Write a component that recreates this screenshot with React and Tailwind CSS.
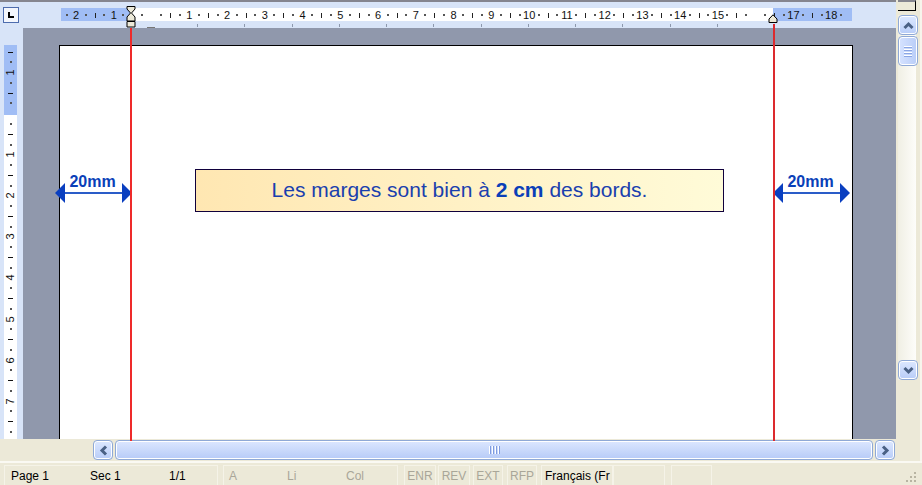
import React from "react";

function Tick({ vertical }) {
  return <span className={vertical ? "h-px w-[5px] bg-[#111]" : "h-[5px] w-px bg-[#222]"} />;
}

function Dot() {
  return <span className="h-[2px] w-[2px] bg-[#555]" />;
}

// Quarter-centimetre marks: "." is a dot, "|" a half-centimetre tick, "" a blank.
const topMarks = [];
for (let n = -2; n <= 18; n++) {
  topMarks.push(".", n === 0 || n === 16 ? "" : String(Math.abs(n)), ".");
  if (n < 18) topMarks.push(n === -1 ? "" : "|");
}

const sideMarks = ["|", ".", "1", ".", "|", ".", ""];
for (let n = 1; n <= 7; n++) sideMarks.push(".", "|", ".", String(n));
sideMarks.push(".", "|", ".");

function Mark({ mark, vertical }) {
  if (mark === ".") return <Dot />;
  if (mark === "|") return <Tick vertical={vertical} />;
  return <span className={vertical ? "-rotate-90" : ""}>{mark}</span>;
}

function TopRuler() {
  return (
    <div className="flex h-7 shrink-0 flex-col border-t-2 border-[#85858f] bg-[#d8e4f8]">
      <div className="flex pt-[5px]">
        <button
          type="button"
          aria-label="Tabulation gauche"
          className="ml-[3px] flex h-4 w-4 shrink-0 items-center justify-center border border-[#4d6cae] bg-[#f3f6fd]"
        >
          <span className="h-[6px] w-[6px] border-b-2 border-l-2 border-black" />
        </button>
        <div className="relative mr-11 ml-[42px] mt-px flex h-[13px] flex-1 items-center bg-[linear-gradient(90deg,#a0bdf5_70px,#fff_70px,#fff_calc(100%-79px),#a0bdf5_calc(100%-79px))] pt-px pr-[7px] pl-px text-[11px] leading-[13px] text-[#111]">
          {topMarks.map((m, i) => (
            <span key={i} className="flex w-0 flex-1 items-center justify-center">
              <Mark mark={m} />
            </span>
          ))}
          <svg className="absolute -top-[2px] left-[65px]" width="10" height="22" viewBox="0 0 10 22" aria-hidden="true">
            <path d="M1 .5H9V3L5.5 7L9 11V15H1V11L4.5 7L1 3Z" fill="#ece9d8" stroke="#000" />
            <path d="M1 15.5H9V21H1Z" fill="#ece9d8" stroke="#000" />
          </svg>
          <svg className="absolute top-[6px] right-[74px]" width="10" height="10" viewBox="0 0 10 10" aria-hidden="true">
            <path d="M5 .8L9 5V8.5H1V5Z" fill="#ece9d8" stroke="#000" />
          </svg>
        </div>
      </div>
      <div className="mr-[155px] ml-[147px] flex items-start">
        <span className="mt-[4px] h-px w-[8px] bg-[#777]" />
        <div className="ml-[19px] flex flex-1">
          {Array.from({ length: 12 }, (_, i) => (
            <span key={i} className="flex flex-1 justify-center">
              <span className="mt-px h-[3px] w-px bg-[#8d98ad]" />
            </span>
          ))}
        </div>
      </div>
    </div>
  );
}

function SideRuler() {
  return (
    <div className="flex w-[23px] shrink-0 bg-[#d8e4f8] pt-[17px] pl-1">
      <div className="flex w-[13px] flex-col bg-[linear-gradient(180deg,#a0bdf5_70px,#fff_70px)] py-[2px] text-[11px] leading-[13px] text-[#111]">
        {sideMarks.map((m, i) => (
          <span key={i} className="flex h-0 flex-1 items-center justify-center">
            <Mark mark={m} vertical />
          </span>
        ))}
      </div>
    </div>
  );
}

function Measure({ className }) {
  return (
    <div className={"flex w-[77px] shrink-0 flex-col items-stretch pt-1 " + className}>
      <span className="pr-[2px] text-center text-[16px] leading-[18px] font-bold text-[#0a3fb8]">20mm</span>
      <div className="-mt-2 flex items-center">
        <svg width="10" height="20" viewBox="0 0 10 20" aria-hidden="true">
          <path d="M0 10L10 0V20Z" fill="#0a3fc0" />
        </svg>
        <span className="h-[2px] flex-1 bg-[#2a5cc8]" />
        <svg width="10" height="20" viewBox="0 0 10 20" aria-hidden="true">
          <path d="M10 10L0 0V20Z" fill="#0a3fc0" />
        </svg>
      </div>
    </div>
  );
}

function Page() {
  return (
    <main className="flex flex-1 bg-[#9098ac] pt-[17px] pr-[43px] pl-9">
      <div className="relative flex-1 border-x border-t border-black bg-white pt-[123px]">
        <span className="absolute -top-[18px] -bottom-[2px] left-[70px] z-10 w-[2px] bg-[#ee2a2a]" />
        <span className="absolute -top-[22px] right-[77px] -bottom-[2px] z-10 w-[2px] bg-[#dc2a2e]" />
        <div className="flex items-start">
          <Measure className="-ml-[5px]" />
          <p className="mr-[49px] ml-[63px] h-[43px] flex-1 border border-[#10003c] bg-linear-to-r from-[#ffe7b2] to-[#fffbd8] text-center text-[21px] leading-10 text-[#1a3fae]">
            Les marges sont bien à <strong className="text-[#0a3fb8]">2 cm</strong> des bords.
          </p>
          <Measure className="mr-[2px]" />
        </div>
      </div>
    </main>
  );
}

const arrows = {
  up: "M1.5 8L5.5 4L9.5 8",
  down: "M1.5 3L5.5 7L9.5 3",
  left: "M8 1.5L4 5.5L8 9.5",
  right: "M3 1.5L7 5.5L3 9.5",
};

function ArrowButton({ dir, label }) {
  return (
    <button
      type="button"
      aria-label={label}
      className="flex h-5 w-5 shrink-0 items-center justify-center rounded-[4px] border border-[#8fa9d6] bg-linear-to-b from-[#dce8ff] to-[#b9cdf8] inset-ring inset-ring-white"
    >
      <svg width="11" height="11" viewBox="0 0 11 11" aria-hidden="true">
        <path d={arrows[dir]} fill="none" stroke="#4a6185" strokeWidth="3" />
      </svg>
    </button>
  );
}

function VerticalScroll() {
  return (
    <aside className="flex w-[26px] shrink-0 flex-col border-r-2 border-[#f7f5ec] bg-[#ece9d8] pr-1 pl-[2px]">
      <div className="h-[11px] shrink-0 border-t-2 border-r border-b border-t-[#85858f] border-r-black border-b-black bg-[#ece9d8]" />
      <div className="mt-1 flex h-[365px] flex-col bg-linear-to-r from-[#f0efe4] to-[#fdfdfa]">
        <ArrowButton dir="up" label="Défiler vers le haut" />
        <div className="mt-px flex h-[30px] w-5 shrink-0 flex-col items-center justify-center gap-px rounded-[4px] border border-[#8fa9d6] bg-linear-to-r from-[#d6e3ff] to-[#b9cdf8] inset-ring inset-ring-white">
          {[0, 1, 2, 3].map((i) => (
            <span key={i} className="h-[2px] w-2 border-t border-white bg-[#8ba6e4]" />
          ))}
        </div>
        <div className="mt-auto">
          <ArrowButton dir="down" label="Défiler vers le bas" />
        </div>
      </div>
    </aside>
  );
}

function HorizontalScroll() {
  return (
    <div className="flex h-[22px] shrink-0 items-start bg-[#ece9d8] pt-px pr-px pl-[93px]">
      <ArrowButton dir="left" label="Défiler vers la gauche" />
      <div className="mx-[2px] flex h-5 flex-1 items-center justify-center gap-px rounded-[4px] border border-[#8fa9d6] bg-linear-to-b from-[#dce7ff] to-[#b7cbf7] inset-ring inset-ring-white">
        {[0, 1, 2, 3].map((i) => (
          <span key={i} className="h-2 w-[2px] border-l border-white bg-[#7f9be0]" />
        ))}
      </div>
      <ArrowButton dir="right" label="Défiler vers la droite" />
    </div>
  );
}

function Cell({ className, children }) {
  return (
    <span className={"flex h-5 shrink-0 items-center border border-b-0 border-[#f5f3e8] " + className}>
      {children}
    </span>
  );
}

function StatusBar() {
  return (
    <footer className="flex h-6 shrink-0 items-end border-t-2 border-[#faf9f3] bg-[#ece9d8] pl-1 text-[12px] leading-4 whitespace-nowrap text-[#a9a698]">
      <Cell className="w-[214px] pl-[6px] text-black">
        <span className="w-[79px]">Page 1</span>
        <span className="w-[79px]">Sec 1</span>
        <span>1/1</span>
      </Cell>
      <Cell className="ml-[5px] w-[175px] pl-[5px]">
        <span className="w-[58px]">A</span>
        <span className="w-[59px]">Li</span>
        <span>Col</span>
      </Cell>
      <Cell className="ml-[6px] w-8 justify-center">ENR</Cell>
      <Cell className="ml-[2px] w-8 justify-center">REV</Cell>
      <Cell className="ml-[3px] w-[30px] justify-center">EXT</Cell>
      <Cell className="ml-[4px] w-[30px] justify-center">RFP</Cell>
      <Cell className="ml-[4px] w-[72px] overflow-hidden pl-[3px] text-black">Français (Fr</Cell>
      <Cell className="w-[52px]" />
      <Cell className="ml-[6px] w-[41px]" />
      <svg className="mr-1 mb-px ml-auto" width="14" height="14" viewBox="0 0 14 14" aria-hidden="true">
        <path
          d="M10 2h2v2h-2zM6 6h2v2h-2zM10 6h2v2h-2zM2 10h2v2h-2zM6 10h2v2h-2zM10 10h2v2h-2z"
          fill="#b8b4a2"
        />
      </svg>
    </footer>
  );
}

export default function App() {
  return (
    <div className="flex min-h-screen flex-col bg-[#ece9d8] font-['Liberation_Sans',Arial,sans-serif]">
      <div className="flex flex-1">
        <div className="flex min-w-0 flex-1 flex-col">
          <TopRuler />
          <div className="flex flex-1">
            <SideRuler />
            <Page />
          </div>
          <HorizontalScroll />
        </div>
        <VerticalScroll />
      </div>
      <StatusBar />
    </div>
  );
}
